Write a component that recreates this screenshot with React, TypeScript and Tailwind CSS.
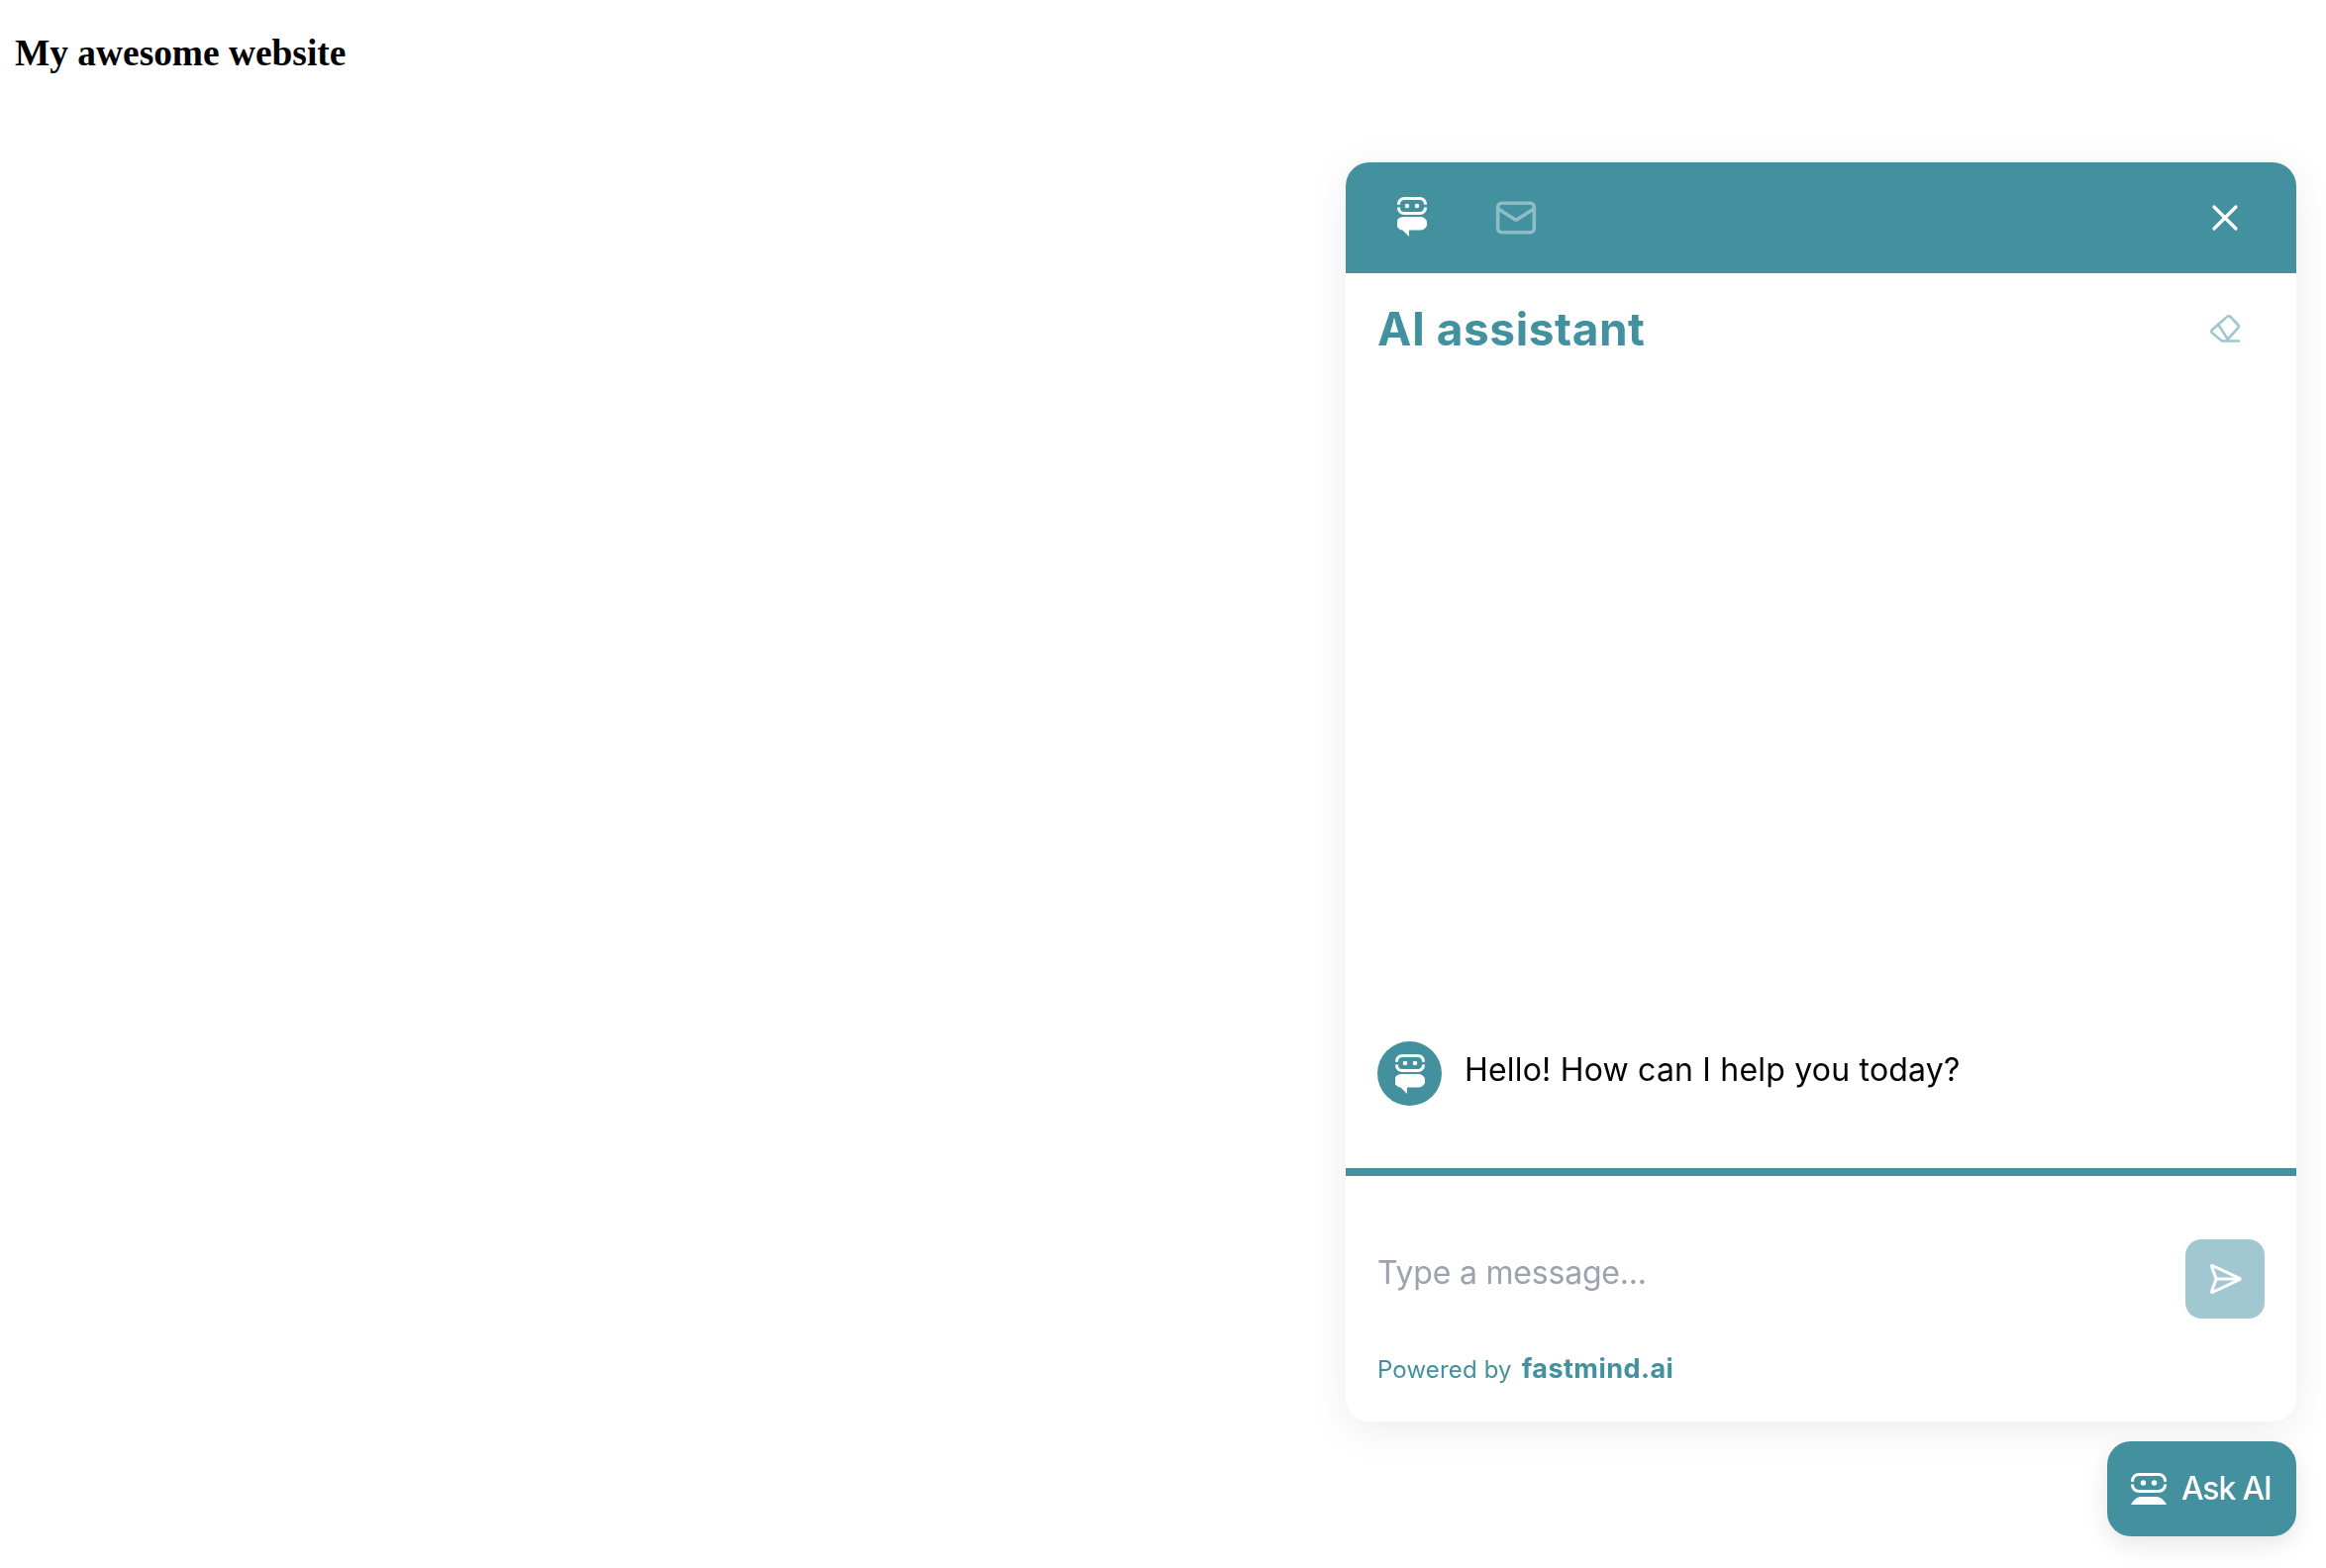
import { Mail, SendHorizontal, X } from "lucide-react"

const teal = "#43919f"

function BotChatIcon({ className }: { className?: string }) {
  return (
    <svg viewBox="0 0 30 40" className={className} fill="none">
      <path d="M1.500 7.800V7A5.500 5.500 0 0 1 7 1.500h16A5.500 5.500 0 0 1 28.500 7v.800" stroke="#fff" strokeWidth="3" />
      <path d="M1.500 10.500v.500A5.500 5.500 0 0 0 7 16.500h16a5.500 5.500 0 0 0 5.500-5.500v-.500" stroke="#fff" strokeWidth="3" />
      <circle cx="10" cy="9" r="2.300" fill="#fff" />
      <circle cx="20" cy="9" r="2.300" fill="#fff" />
      <path d="M6.500 20h17a6.700 6.700 0 0 1 0 13.500H12V40l-6.500-6.500A6.700 6.700 0 0 1 6.500 20z" fill="#fff" />
    </svg>
  )
}

function BotIcon({ className }: { className?: string }) {
  return (
    <svg viewBox="0 0 36 32" className={className} fill="none">
      <path d="M1.500 8.700V8A6.500 6.500 0 0 1 8 1.500h20A6.500 6.500 0 0 1 34.500 8v.700" stroke="#fff" strokeWidth="3" />
      <path d="M1.500 11.500v.500A6.500 6.500 0 0 0 8 18.500h20a6.500 6.500 0 0 0 6.500-6.500v-.500" stroke="#fff" strokeWidth="3" />
      <circle cx="12.500" cy="10" r="2.700" fill="#fff" />
      <circle cx="23.500" cy="10" r="2.700" fill="#fff" />
      <path d="M10 24h16c4 0 8 4 10 8H0c2-4 6-8 10-8z" fill="#fff" />
    </svg>
  )
}

function EraserIcon({ className }: { className?: string }) {
  return (
    <svg viewBox="0 0 30 28" className={className} fill="none" stroke={teal} strokeWidth="2.600" strokeLinecap="round" strokeLinejoin="round">
      <path d="M12 26.500 2.200 18.500a2.500 2.500 0 0 1 0-3.500L17 2a2.500 2.500 0 0 1 3.500 0l7.500 8a2.500 2.500 0 0 1 0 3.500L16 26.500" />
      <path d="M8 9.500 18 25" />
      <path d="M12 26.500h17" />
    </svg>
  )
}

export default function App() {
  return (
    <div className="min-h-screen bg-white">
      <h1 className="pl-[15px] pt-[32px] text-[37.4px] leading-[43px] font-bold text-black font-['Liberation_Serif',serif]">
        My awesome website
      </h1>

      <div className="fixed right-[30px] bottom-[32px] flex flex-col items-end gap-5 font-['Inter',sans-serif]">
        <div className="flex h-[1272px] w-[960px] flex-col overflow-hidden rounded-3xl bg-white shadow-[0_8px_40px_rgba(0,0,0,0.08)]">
          <div className="flex h-[112px] shrink-0 items-center bg-[#43919f] pl-[52px] pr-[50px]">
            <BotChatIcon className="h-[40px] w-[30px] -translate-y-[1px]" />
            <Mail size={44} strokeWidth={1.95} className="ml-[68px] text-white opacity-40" />
            <X size={44} strokeWidth={1.8} className="ml-auto text-white" />
          </div>

          <div className="flex items-center justify-between pl-[32px] pr-[57px] pt-[28px]">
            <h2 className="text-[46px] leading-[56px] font-bold tracking-[0.55px] text-[#43919f]">AI assistant</h2>
            <EraserIcon className="h-[28px] w-[30px] opacity-50" />
          </div>

          <div className="flex flex-1 flex-col justify-end px-[32px] pb-[63px]">
            <div className="flex items-start gap-[23px]">
              <div className="flex h-[65px] w-[65px] items-center justify-center rounded-full bg-[#43919f]">
                <BotChatIcon className="h-[40px] w-[30px]" />
              </div>
              <p className="pt-[9px] text-[32px] leading-[40px] tracking-[0.2px] text-black">
                Hello! How can I help you today?
              </p>
            </div>
          </div>

          <div className="h-2 shrink-0 bg-[#43919f]" />

          <div className="flex items-start justify-between pl-[32px] pr-[32px] pt-[64px]">
            <input
              placeholder="Type a message..."
              readOnly
              className="mt-[10px] h-[48px] flex-1 bg-transparent text-[32px] tracking-[-0.2px] outline-none placeholder:text-[#9ca3af]"
            />
            <button className="flex h-20 w-20 items-center justify-center rounded-2xl bg-[#a1c8d0]">
              <SendHorizontal size={36} strokeWidth={2} className="text-white" />
            </button>
          </div>

          <div className="flex items-baseline gap-[10px] pl-[32px] pt-[35px] pb-[36px] text-[24px] leading-[32px] text-[#43919f]">
            <span className="tracking-[0.15px]">Powered by</span>
            <span className="text-[27px] font-bold tracking-[0.45px]">fastmind.ai</span>
          </div>
        </div>

        <button className="flex h-24 w-[191px] items-center gap-[15px] rounded-3xl bg-[#43919f] pl-6 text-[32px] font-medium tracking-[-1.2px] text-white shadow-[0_8px_24px_rgba(0,0,0,0.1)]">
          <BotIcon className="h-[32px] w-[36px]" />
          <span>Ask AI</span>
        </button>
      </div>
    </div>
  )
}
